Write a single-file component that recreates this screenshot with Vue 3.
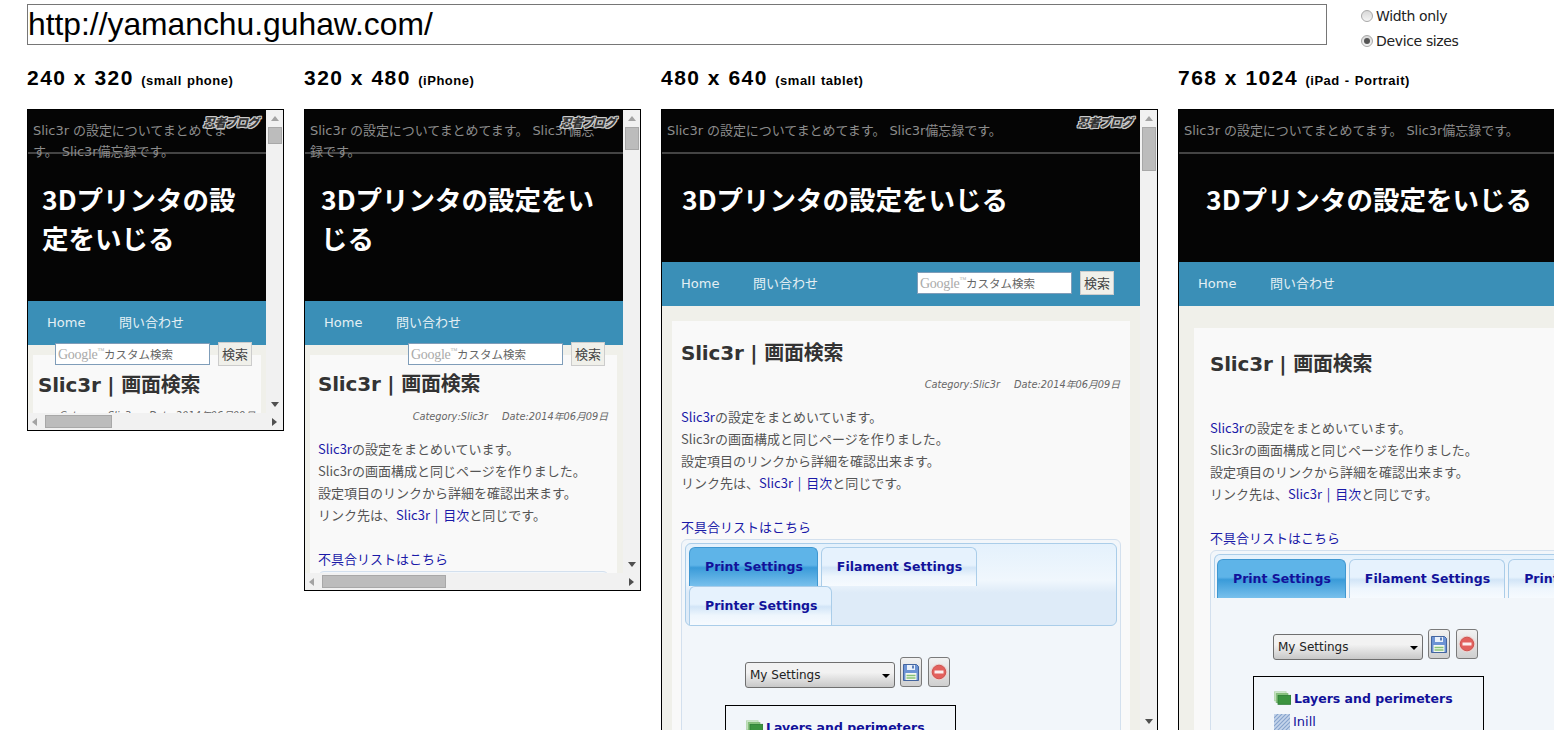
<script setup>
const frames = [
  { id: 'f1', size: '240 x 320', note: '(small phone)', title: ['3Dプリンタの設', '定をいじる'], hscroll: true },
  { id: 'f2', size: '320 x 480', note: '(iPhone)', title: ['3Dプリンタの設定をい', 'じる'], hscroll: true },
  { id: 'f3', size: '480 x 640', note: '(small tablet)', title: ['3Dプリンタの設定をいじる'], hscroll: false },
  { id: 'f4', size: '768 x 1024', note: '(iPad - Portrait)', title: ['3Dプリンタの設定をいじる'], hscroll: false }
]
</script>

<template>
  <div class="page">
    <div class="top">
      <input class="url" value="http://yamanchu.guhaw.com/" />
      <div class="modes">
        <label class="mode"><span class="radio"></span>Width only</label>
        <label class="mode"><span class="radio on"></span>Device sizes</label>
      </div>
    </div>
    <div class="columns">
      <section v-for="f in frames" :key="f.id" class="col" :class="f.id">
        <h2 class="size">{{ f.size }} <small>{{ f.note }}</small></h2>
        <div class="frame">
          <div class="view">
            <header class="head">
              <div class="tag">Slic3r の設定についてまとめてます。 Slic3r備忘録です。</div>
              <span class="ninja">忍者ブログ</span>
              <h1 class="title"><span v-for="t in f.title" :key="t">{{ t }}</span></h1>
            </header>
            <nav class="nav">
              <a>Home</a><a>問い合わせ</a>
            </nav>
            <div class="search">
              <span class="sbox"><span class="goog">Google<sup>™</sup></span>カスタム検索</span>
              <span class="sbtn">検索</span>
            </div>
            <main class="body">
              <article class="card">
                <h3 class="art">Slic3r | 画面検索</h3>
                <p class="meta"><i>Category:Slic3r</i><i>Date:2014年06月09日</i></p>
                <p class="text">
                  <span><a>Slic3r</a>の設定をまとめいています。</span>
                  <span>Slic3rの画面構成と同じページを作りました。</span>
                  <span>設定項目のリンクから詳細を確認出来ます。</span>
                  <span>リンク先は、<a>Slic3r | 目次</a>と同じです。</span>
                </p>
                <p class="bugs"><a>不具合リストはこちら</a></p>
                <div class="panel">
                  <div class="tabs">
                    <span class="tab active">Print Settings</span>
                    <span class="tab">Filament Settings</span>
                    <span class="tab">Printer Settings</span>
                  </div>
                  <div class="tools">
                    <span class="select">My Settings<b></b></span>
                    <span class="ibtn">
                      <svg width="16" height="17" viewBox="0 0 16 17"><path d="M.5.5h13l2 2v14H.5z" fill="#6c93d4" stroke="#44659f"/><rect x="4" y="1" width="8" height="5" fill="#eaf1fb"/><rect x="9" y="1.500" width="2" height="3" fill="#5f7fb8"/><rect x="2.500" y="9" width="11" height="7" fill="#f4f8f0"/><path d="M3.500 11.500h9M3.500 14h9" stroke="#86c276" stroke-width="1.500"/></svg>
                    </span>
                    <span class="ibtn">
                      <svg width="18" height="18" viewBox="0 0 18 18"><circle cx="9" cy="9" r="8.300" fill="#ecd3d0"/><circle cx="9" cy="9" r="6.800" fill="#e2605c" stroke="#cf5450"/><rect x="4.500" y="7.500" width="9" height="3" fill="#fbeeee"/></svg>
                    </span>
                  </div>
                  <div class="menu">
                    <div class="mi lead">
                      <svg width="17" height="15" viewBox="0 0 19 16"><rect x=".5" y=".5" width="13" height="10" fill="#d3ead0" stroke="#b4d8ae"/><rect x="2.500" y="2.500" width="13" height="10" fill="#8fc985" stroke="#7fb874"/><rect x="4.500" y="4.500" width="14" height="10" fill="#3c943f" stroke="#2f7f35"/></svg>
                      <a>Layers and perimeters</a>
                    </div>
                    <div class="mi">
                      <svg width="16" height="16" viewBox="0 0 16 16"><rect width="16" height="16" fill="#c4d4ea"/><path d="M-2 6 6-2M-2 10 10-2M-2 14 14-2M-2 18 18-2M2 18 18 2M6 18 18 6M10 18 18 10M14 18 18 14" stroke="#86a3cc" stroke-width="1.100"/></svg>
                      <a>Inill</a>
                    </div>
                  </div>
                </div>
              </article>
            </main>
          </div>
          <div class="vbar">
            <span class="arrow up"></span>
            <span class="thumb"></span>
            <span class="arrow down"></span>
          </div>
          <div v-if="f.hscroll" class="hbar">
            <span class="arrow left"></span>
            <span class="hthumb"></span>
            <span class="arrow right"></span>
          </div>
        </div>
      </section>
    </div>
  </div>
</template>

<style>
html, body { margin: 0; height: 100%; overflow: hidden; background: #fff; }
</style>

<style scoped>
.page { width: 1554px; height: 730px; overflow: hidden; font-family: "Liberation Sans", sans-serif; }
.top { height: 54px; padding: 4px 0 0 27px; box-sizing: border-box; display: flex; align-items: flex-start; }
.url { width: 1300px; height: 41px; box-sizing: border-box; border: 1px solid #767676; padding: 0; font: 31.8px "Liberation Sans", sans-serif; color: #000; outline: none; }
.modes { margin-left: 34px; display: flex; flex-direction: column; gap: 6px; padding-top: 2px; }
.mode { display: flex; align-items: center; gap: 3px; height: 19px; font: 14px "DejaVu Sans", sans-serif; letter-spacing: -.35px; color: #222; }
.radio { width: 12px; height: 12px; border-radius: 50%; box-sizing: border-box; border: 1px solid #a8a8a8; background: linear-gradient(#d8d8d8, #f4f4f4); position: relative; }
.radio.on::after { content: ""; position: absolute; left: 2px; top: 2px; width: 6px; height: 6px; border-radius: 50%; background: #555; }
.columns { display: flex; gap: 20px; padding-left: 27px; align-items: flex-start; }
.col { flex: none; }
.size { margin: 0; height: 55px; padding-top: 9px; box-sizing: border-box; font: bold 21px/30px "Liberation Sans", sans-serif; letter-spacing: 1.5px; color: #000; white-space: nowrap; }
.size small { font: bold 13px "Liberation Sans", sans-serif; letter-spacing: .5px; word-spacing: 1px; }
.frame { border: 1px solid #000; box-sizing: border-box; display: grid; overflow: hidden; background: #f1f1f1; }
.f1 .frame { width: 257px; height: 322px; grid-template: 1fr 17px / 238px 17px; }
.f2 .frame { width: 337px; height: 482px; grid-template: 1fr 17px / 318px 17px; }
.f3 .frame { width: 497px; height: 622px; grid-template: 1fr / 478px 17px; }
.f4 .frame { width: 785px; height: 622px; grid-template: 1fr / 766px 17px; }
.view { position: relative; overflow: hidden; background: #f0f0ea; min-height: 0; }
.head { position: relative; background: #050505; height: 191px; }
.f3 .head, .f4 .head { height: 152px; }
.tag { padding: 10px 28px 0 5px; border-bottom: 2px solid #444; height: 32px; font: 13px/21px "DejaVu Sans", "Noto Sans CJK JP", sans-serif; letter-spacing: -.05px; color: #8c8c8c; }
.ninja { position: absolute; right: 8px; top: 4px; font: italic 900 12px/15px "Noto Sans CJK JP", sans-serif; letter-spacing: -1px; color: #333; text-shadow: 1px 0 #ccc, -1px 0 #ccc, 0 1px #ccc, 0 -1px #ccc, 1px 1px #ccc, -1px -1px #ccc, 1px -1px #ccc, -1px 1px #ccc; }
.title { margin: 25px 0 0; padding-left: 14px; font: bold 26.5px/39px "Noto Sans CJK JP", "DejaVu Sans", sans-serif; color: #fff; }
.f2 .title { padding-left: 16px; }
.f3 .title { padding-left: 20px; }
.f4 .title { padding-left: 27px; }
.title span { display: block; white-space: nowrap; }
.nav { height: 44px; background: #3a8fb7; display: flex; gap: 33.5px; padding-left: 19px; align-items: center; font: 13px/16px "DejaVu Sans", "Noto Sans CJK JP", sans-serif; color: #e4eff4; }
.nav a { display: block; height: 16px; margin-top: -1px; }
.search { position: absolute; display: flex; align-items: center; gap: 8px; height: 24px; }
.f1 .search { left: 27px; top: 232px; }
.f2 .search { left: 103px; top: 232px; }
.f3 .search { left: 255px; top: 161px; }
.f4 .search { left: 600px; top: 161px; }
.sbox { width: 155px; height: 22px; box-sizing: border-box; border: 1px solid #7f9db9; background: #fff; padding-left: 2px; font: 11.5px/20px "Noto Sans CJK JP", sans-serif; color: #666; white-space: nowrap; }
.goog { font: 14px "Liberation Serif", serif; color: #aaa; letter-spacing: -.3px; }
.goog sup { font-size: 7px; }
.sbtn { width: 34px; height: 24px; box-sizing: border-box; border: 1px solid #ccc; background: #f0f0ea; text-align: center; font: 13px/22px "Noto Sans CJK JP", sans-serif; color: #444; }
.body { padding: 10px 6px 0 5px; }
.f1 .body { padding: 10px 5px 0 5px; }
.f3 .body { padding: 15px 10px 0 10px; }
.f4 .body { padding: 22px 15px 0 15px; }
.card { background: #f9f9f9; padding: 14px 8px 0; min-height: 800px; }
.f1 .card { padding: 15px 5px 0; width: 218px; overflow: hidden; }
.f3 .card { padding: 17px 9px 0; }
.f4 .card { padding: 21px 16px 0; }
.art { margin: 0; font: bold 20px/30px "DejaVu Sans", "Noto Sans CJK JP", sans-serif; letter-spacing: -.2px; color: #333; white-space: nowrap; }
.meta { margin: 9px 0 0; height: 18px; padding-right: 1px; display: flex; justify-content: flex-end; gap: 14px; font: italic 9.8px/18px "DejaVu Sans", "Noto Sans CJK JP", sans-serif; color: #666; white-space: nowrap; }
.f1 .meta { margin-top: 7px; }
.f3 .meta { margin-top: 8px; }
.f4 .meta { margin-top: 7px; }
.text { margin: 12px 0 0; font: 13px/22px "Noto Sans CJK JP", sans-serif; color: #555; }
.f4 .text { margin-top: 13px; }
.text span { display: block; white-space: nowrap; }
.text a, .bugs a { color: #1a1aa8; word-spacing: 2px; }
.bugs { margin: 22px 0 0; font: 13px/22px "Noto Sans CJK JP", sans-serif; }
.panel { margin-top: 1px; box-sizing: border-box; border: 1px solid #d3e0ee; border-radius: 6px; background: #f2f6fa; padding: 3px; }
.f4 .panel { width: 700px; }
.tabs { display: flex; flex-wrap: wrap; border: 1px solid #aacde9; border-radius: 6px; background: linear-gradient(#e4f1fc, #f0f7fd 45%, #deebf8 60%); padding: 3px 3px 0; min-height: 83px; align-content: flex-start; box-sizing: border-box; column-gap: 3px; }
.f4 .tabs { flex-wrap: nowrap; min-height: 0; border-bottom: 0; border-radius: 6px 6px 0 0; padding: 4px 3px 0 2px; background: #f2f6fa linear-gradient(#e4f1fc, #f2f6fa 60%); }
.tab { height: 39px; box-sizing: border-box; padding: 0 14px 0 15px; border: 1px solid #aacde9; border-bottom: 0; border-radius: 6px 6px 0 0; background: linear-gradient(#e6f2fd 45%, #d2e5f7 52%, #eef6fd 75%, #f6fafe); font: bold 12.5px/37px "DejaVu Sans", sans-serif; color: #12129a; white-space: nowrap; }
.tab.active { background: linear-gradient(#5eb4e8 45%, #3a9bd9 52%, #78c0ec); border-color: #3f97d1; }
.tools { display: flex; align-items: flex-start; gap: 6px; margin: 31px 0 0 60px; }
.f4 .tools { margin-top: 31px; margin-left: 59px; }
.select { display: flex; align-items: center; width: 150px; height: 26px; margin: 5px -1px 0 0; box-sizing: border-box; border: 1px solid #6f6f6f; border-radius: 3px; background: linear-gradient(#f2f2f2 40%, #c8c8c8); padding: 0 4px; font: 12px "DejaVu Sans", sans-serif; color: #222; position: relative; }
.select b { position: absolute; right: 4px; top: 11px; border: 4px solid transparent; border-top: 4px solid #000; border-bottom: 0; }
.ibtn { width: 22px; height: 30px; box-sizing: border-box; border: 1px solid #7a7a7a; border-radius: 3px; background: linear-gradient(#f2f2f2, #cfcfcf); display: flex; align-items: center; justify-content: center; }
.menu { margin: 17px 0 0 40px; width: 231px; height: 300px; box-sizing: border-box; border: 1px solid #000; padding: 10px 20px; }
.f4 .menu { margin: 16px 0 0 39px; }
.mi { display: flex; align-items: center; gap: 3px; height: 23px; font: 13px "DejaVu Sans", sans-serif; color: #12129a; white-space: nowrap; }
.lead { font-weight: 700; font-size: 12.5px; }
.vbar, .hbar { display: flex; align-items: center; background: #f1f1f1; }
.vbar { flex-direction: column; grid-row: 1; grid-column: 2; }
.hbar { grid-row: 2; grid-column: 1 / 3; padding: 0 4px; }
.arrow { flex: none; width: 0; height: 0; border: 4px solid transparent; }
.arrow.up { border-bottom: 5px solid #a3a3a3; border-top: 0; margin-top: 6px; }
.arrow.down { border-top: 5px solid #505050; border-bottom: 0; margin: auto 0 6px; }
.arrow.left { border-right: 5px solid #a3a3a3; border-left: 0; }
.arrow.right { border-left: 5px solid #505050; border-right: 0; margin-left: auto; margin-right: 2px; }
.thumb { width: 14px; height: 17px; margin-top: 6px; background: #bcbcbc; border: 1px solid #a8a8a8; box-sizing: border-box; }
.f3 .thumb { height: 44px; }
.f2 .thumb { height: 23px; }
.hthumb { height: 13px; background: #bcbcbc; border: 1px solid #a8a8a8; box-sizing: border-box; margin-left: 8px; }
.f1 .hthumb { width: 67px; }
.f2 .hthumb { width: 124px; }
</style>
